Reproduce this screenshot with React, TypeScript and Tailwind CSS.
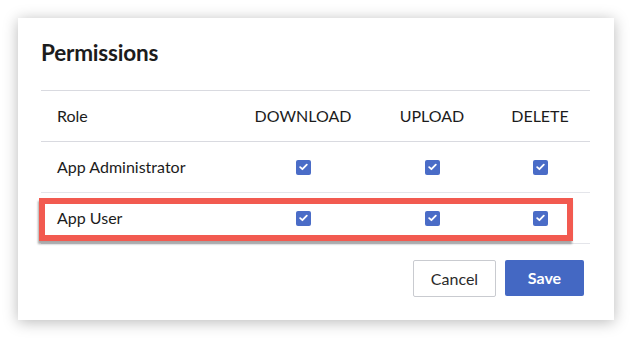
import type { JSX } from "react";

const roles = ["App Administrator", "App User"];
const perms = ["DOWNLOAD", "UPLOAD", "DELETE"];

function Check(): JSX.Element {
  return (
    <span className="flex h-[15px] w-[15px] items-center justify-center rounded-[2px] bg-[#4a6cc7]">
      <svg width="9" height="8" viewBox="0 0 9 8" fill="none">
        <path d="M1.2 4.2 3.4 6.2 7.8 1.6" stroke="white" strokeWidth="1.8" strokeLinecap="round" strokeLinejoin="round" />
      </svg>
    </span>
  );
}

const cols = "grid grid-cols-[197px_130px_128px_88px] items-center";

export default function App(): JSX.Element {
  return (
    <div className="h-[338px] w-[632px] bg-white pl-[18px] pt-[18px] font-['Lato',sans-serif] text-[#1c1c1c]">
      <div className="relative flex h-[302px] w-[596px] flex-col bg-white pl-[23px] pr-[24px] shadow-[0_2px_14px_rgba(0,0,0,0.28)]">
        <h2 className="pt-[21px] text-[22.5px] font-bold leading-[28px] tracking-[-0.2px]">Permissions</h2>

        <div className="mt-[23px] border-t border-[#d9dae0]">
          <div className={`${cols} h-[51px] border-b border-[#d9dae0] text-[16px]`}>
            <span className="pl-[16px]">Role</span>
            {perms.map((p) => (
              <span key={p} className="text-center">{p}</span>
            ))}
          </div>
          {roles.map((r) => (
            <div key={r} className={`${cols} h-[51px] border-b border-[#e4e5ea] text-[16px]`}>
              <span className="pl-[16px]">{r}</span>
              {perms.map((p) => (
                <span key={p} className="flex justify-center">
                  <Check />
                </span>
              ))}
            </div>
          ))}
        </div>

        <div className="mt-[16px] flex justify-end gap-[9px] pr-[6px]">
          <button className="h-[37px] w-[83px] rounded-[2px] border border-[#c9cbd0] bg-white text-[16px] text-[#2a2a2a]">
            Cancel
          </button>
          <button className="h-[36px] w-[79px] rounded-[2px] bg-[#4468c3] text-[16px] font-bold text-white">
            Save
          </button>
        </div>

        <div className="absolute left-[21px] top-[180px] h-[43px] w-[534px] border-[6px] border-[#f25a50] shadow-[-1px_3px_2px_rgba(0,0,0,0.35)]" />
      </div>
    </div>
  );
}
